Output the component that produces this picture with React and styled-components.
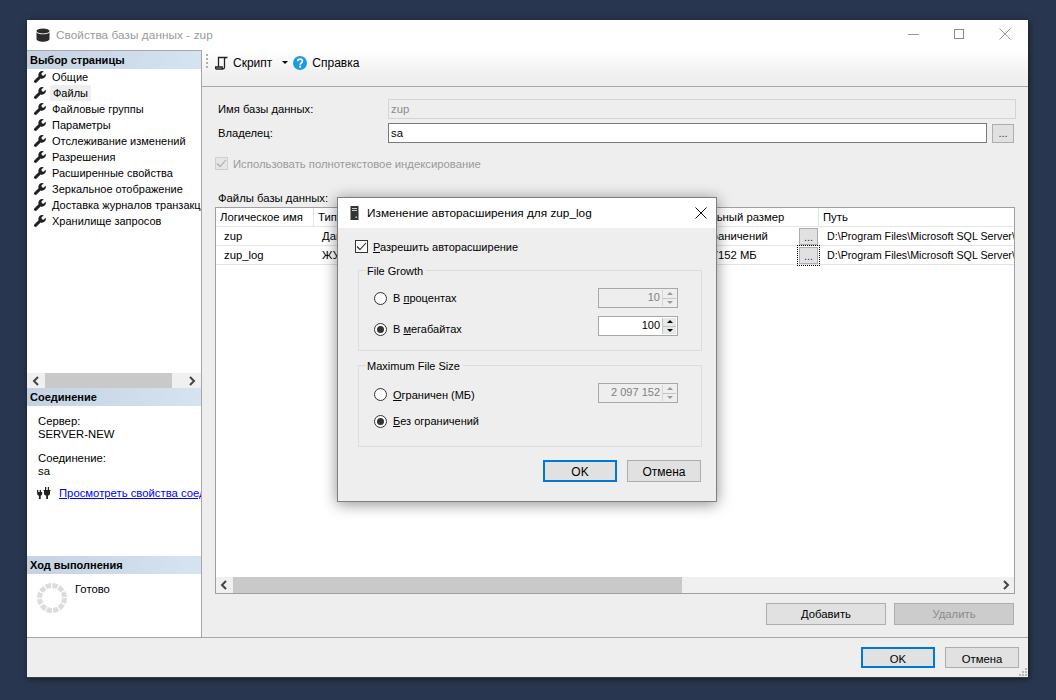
import React from "react";
import styled, { createGlobalStyle } from "styled-components";

const Global = createGlobalStyle`
  html, body { margin: 0; padding: 0; height: 100%; background: #28374f; }
  * { box-sizing: border-box; }
  body { font-family: "Liberation Sans", Arial, sans-serif; font-size: 11.3px; color: #000; }
  u { text-underline-offset: 1px; }
`;

const Page = styled.div`
  width: 1056px;
  height: 700px;
  padding: 20px 28px 22px 27px;
`;
const Window = styled.div`
  position: relative;
  width: 1001px;
  height: 658px;
  background: #eee;
  display: flex;
  flex-direction: column;
  box-shadow: 1px 1px 6px rgba(0, 0, 0, 0.55);
  border-bottom: 1px solid #3c3c3c;
`;
const TitleBar = styled.div`
  height: 30px;
  flex: none;
  background: #fff;
  display: flex;
  align-items: center;
  padding-left: 9px;
  gap: 6px;
`;
const WindowTitle = styled.span`
  font-size: 11.8px;
  letter-spacing: 0.05px;
  color: #9a9a9a;
  flex: 1;
`;
const Controls = styled.div`
  display: flex;
  align-items: center;
  margin-top: -2px;
`;
const ControlBtn = styled.div`
  width: 46px;
  height: 24px;
  display: flex;
  align-items: center;
  justify-content: center;
`;
const Main = styled.div`
  flex: 1;
  display: flex;
  min-height: 0;
`;
const Side = styled.aside`
  width: 175px;
  flex: none;
  background: #fff;
  border-right: 1px solid #a6a6ac;
  display: flex;
  flex-direction: column;
  border-top: 1px solid #a6a6ac;
`;
const SectionHead = styled.div`
  height: 18px;
  flex: none;
  background: linear-gradient(90deg, #c4d2e2, #d6e3f0);
  font-weight: 700;
  line-height: 18px;
  padding-left: 3px;
  font-size: 11px;
`;
const PageList = styled.ul`
  list-style: none;
  margin: 0;
  padding: 0 0 0 7px;
  height: 304px;
  flex: none;
  overflow: hidden;
  font-size: 11px;
`;
const PageItem = styled.li`
  height: 16px;
  display: flex;
  align-items: center;
  gap: 6px;
  white-space: nowrap;
`;
const PageLabel = styled.span`
  padding: 0 ${(p) => (p.$selected ? "3px" : "0")};
  margin-left: ${(p) => (p.$selected ? "-2px" : "0")};
  background: ${(p) => (p.$selected ? "#eeeeee" : "transparent")};
  line-height: 16px;
`;
const HScroll = styled.div`
  height: ${(p) => p.$h}px;
  flex: none;
  background: #f0f0f0;
  display: flex;
  align-items: center;
  position: relative;
  padding: 0 ${(p) => p.$pad}px;
  justify-content: space-between;
`;
const Thumb = styled.div`
  position: absolute;
  top: 0;
  bottom: 0;
  left: ${(p) => p.$left}px;
  width: ${(p) => p.$width}px;
  background: #c9c9c9;
`;
const ConnBody = styled.div`
  height: 150px;
  flex: none;
  padding: 9px 0 0 11px;
  line-height: 13px;
  overflow: hidden;
  white-space: nowrap;
`;
const ConnBlock = styled.div`
  margin-bottom: ${(p) => p.$mb}px;
`;
const LinkRow = styled.div`
  display: flex;
  align-items: center;
  gap: 7px;
  margin-left: -1px;
`;
const Link = styled.span`
  color: #0000ff;
  text-decoration: underline;
`;
const ProgressBody = styled.div`
  flex: 1;
  display: flex;
  padding: 9px 0 0 10px;
  gap: 8px;
`;
const Content = styled.section`
  flex: 1;
  display: flex;
  flex-direction: column;
  min-width: 0;
`;
const Toolbar = styled.div`
  height: 37px;
  flex: none;
  background: linear-gradient(180deg, #ffffff 0%, #f0f0f0 70%, #eeeeee 100%);
  border-bottom: 1px solid #a6a6ac;
  display: flex;
  align-items: flex-start;
  padding: 4px 0 0 4px;
  font-size: 12px;
`;
const Grip = styled.div`
  width: 2px;
  height: 15px;
  background: repeating-linear-gradient(180deg, #b0b0b0 0 2px, transparent 2px 4px);
  margin-right: 7px;
`;
const ToolItem = styled.div`
  display: flex;
  align-items: center;
  gap: 5px;
  height: 16px;
  margin-top: 1px;
  white-space: nowrap;
`;
const Caret = styled.div`
  width: 0;
  height: 0;
  border-left: 3px solid transparent;
  border-right: 3px solid transparent;
  border-top: 3px solid #000;
  margin: 7px 5px 0 ${(p) => p.$ml}px;
`;
const Form = styled.div`
  flex: 1;
  padding: 12px 13px 0 13px;
  display: flex;
  flex-direction: column;
`;
const FieldRow = styled.div`
  display: flex;
  align-items: center;
  height: 20px;
  margin-bottom: 4px;
  padding-left: 3px;
`;
const FieldLabel = styled.label`
  width: 170px;
  flex: none;
  font-size: 11.2px;
`;
const TextBox = styled.div`
  flex: ${(p) => (p.$disabled ? "1 1 auto" : "none")};
  width: ${(p) => (p.$disabled ? "auto" : "599px")};
  height: 20px;
  margin-right: ${(p) => (p.$disabled ? "-1px" : "0")};
  background: ${(p) => (p.$disabled ? "#eeeeee" : "#fff")};
  border: 1px solid ${(p) => (p.$disabled ? "#d4d4d4" : "#7a7a7a")};
  color: ${(p) => (p.$disabled ? "#8c8c8c" : "#000")};
  padding-left: 2px;
  line-height: 18px;
`;
const Ellipsis = styled.div`
  width: ${(p) => p.$w || 22}px;
  height: ${(p) => p.$h || 19}px;
  margin-left: ${(p) => p.$ml || 0}px;
  flex: none;
  background: #e1e1e1;
  border: 1px solid #adadad;
  text-align: center;
  line-height: 17px;
  font-size: 11px;
  outline: ${(p) => (p.$focus ? "1px dotted #000" : "none")};
  outline-offset: 1px;
  color: ${(p) => (p.$focus ? "#7000a0" : "#333")};
`;
const CheckRow = styled.div`
  display: flex;
  align-items: center;
  gap: ${(p) => p.$gap || 5}px;
  color: ${(p) => (p.$disabled ? "#9a9a9a" : "#000")};
  margin-top: ${(p) => p.$mt || 0}px;
`;
const CheckBox = styled.div`
  width: 13px;
  height: 13px;
  flex: none;
  background: ${(p) => (p.$disabled ? "#e6e6e6" : "#fff")};
  border: 1px solid ${(p) => (p.$disabled ? "#cfcfcf" : "#333")};
  display: flex;
  align-items: center;
  justify-content: center;
`;
const OwnRow = styled.div`
  margin-top: 10px;
  height: 14px;
`;
const TableLabel = styled.div`
  margin-top: 20px;
  padding-left: 3px;
  height: 14px;
  line-height: 14px;
`;
const TableBox = styled.div`
  margin-top: 2px;
  height: 387px;
  width: 800px;
  border: 1px solid #a0a0a0;
  background: #fff;
  display: flex;
  flex-direction: column;
  overflow: hidden;
`;
const RowsArea = styled.div`
  flex: 1;
  overflow: hidden;
`;
const GridRow = styled.div`
  display: grid;
  grid-template-columns: 98px 104px 110px 34px 257px 200px;
  height: 19px;
  border-bottom: 1px solid #e4e4e4;
  white-space: nowrap;
`;
const Cell = styled.div`
  padding-left: ${(p) => p.$pl || (p.$head ? 4 : 8)}px;
  line-height: 18px;
  min-width: 0;
  border-right: 1px solid ${(p) => (p.$head ? "#e4e4e4" : "transparent")};
  display: flex;
  align-items: center;
  justify-content: space-between;
  overflow: ${(p) => (p.$open ? "visible" : "hidden")};
`;
const CellText = styled.span`
  overflow: hidden;
  min-width: 0;
`;
const PathText = styled.span`
  font-size: 10.7px;
`;
const BottomBtns = styled.div`
  display: flex;
  justify-content: flex-end;
  gap: 8px;
  margin-top: 9px;
  width: 799px;
`;
const Btn = styled.div`
  width: ${(p) => p.$w}px;
  height: ${(p) => p.$h}px;
  background: ${(p) => (p.$disabled ? "#cccccc" : "#e1e1e1")};
  border: ${(p) => (p.$primary ? "2px solid #0078d7" : "1px solid #adadad")};
  color: ${(p) => (p.$disabled ? "#8a8a8a" : "#000")};
  display: flex;
  align-items: center;
  justify-content: center;
  flex: none;
  padding-top: ${(p) => p.$pt}px;
`;
const Footer = styled.div`
  height: 40px;
  flex: none;
  background: #eee;
  border-top: 1px solid #a6a6ac;
  display: flex;
  justify-content: flex-end;
  gap: 10px;
  padding: 9px 9px 0 0;
  position: relative;
`;
const ResizeGrip = styled.svg`
  position: absolute;
  right: 0;
  bottom: 0;
`;

/* dialog */
const Dialog = styled.div`
  position: absolute;
  left: 310px;
  top: 177px;
  width: 380px;
  height: 305px;
  background: #eee;
  border: 1px solid #7f7f7f;
  box-shadow: 0 2px 14px rgba(0, 0, 0, 0.45);
  display: flex;
  flex-direction: column;
  font-size: 11px;
`;
const DialogTitle = styled.div`
  height: 30px;
  flex: none;
  background: #fff;
  display: flex;
  align-items: center;
  padding-left: 12px;
  gap: 8px;
  font-size: 11.8px;
`;
const DialogClose = styled.div`
  margin-left: auto;
  margin-right: 9px;
  display: flex;
`;
const DialogBody = styled.div`
  flex: 1;
  padding: 12px 14px 0 17px;
  display: flex;
  flex-direction: column;
`;
const Group = styled.fieldset`
  margin: 0 0 ${(p) => p.$mb}px 3px;
  padding: 0 23px 0 15px;
  width: 344px;
  height: ${(p) => p.$h}px;
  border: 1px solid #dcdcdc;
  min-width: 0;
  display: flex;
  flex-direction: column;
`;
const GroupsWrap = styled.div`
  margin-top: 10px;
`;
const Legend = styled.legend`
  margin-left: -8px;
  padding: 1px 3px 0 1px;
  line-height: 14px;
`;
const OptionRow = styled.div`
  display: flex;
  align-items: center;
  justify-content: space-between;
  height: 20px;
  margin-top: ${(p) => p.$mt}px;
`;
const Radio = styled.div`
  width: 13px;
  height: 13px;
  flex: none;
  border: 1px solid #333;
  border-radius: 50%;
  background: #fff;
  display: flex;
  align-items: center;
  justify-content: center;
  &::after {
    content: "";
    width: 7px;
    height: 7px;
    border-radius: 50%;
    background: ${(p) => (p.$on ? "#333" : "transparent")};
  }
`;
const Spin = styled.div`
  width: 80px;
  height: 20px;
  display: flex;
  background: ${(p) => (p.$disabled ? "#eee" : "#fff")};
  border: 1px solid #a8a8a8;
  color: ${(p) => (p.$disabled ? "#808080" : "#000")};
`;
const SpinValue = styled.div`
  flex: 1;
  text-align: right;
  padding-right: 2px;
  line-height: 16px;
  font-size: 11px;
`;
const SpinArrows = styled.div`
  width: 14px;
  display: flex;
  flex-direction: column;
  border-left: 1px solid ${(p) => (p.$disabled ? "#d6d6d6" : "#c4c4c4")};
  margin: 1px 1px 1px 0;
`;
const SpinArrow = styled.div`
  flex: 1;
  display: flex;
  align-items: center;
  justify-content: center;
  background: ${(p) => (p.$disabled ? "#eee" : "#e8e8e8")};
  & + & {
    border-top: 1px solid ${(p) => (p.$disabled ? "#dcdcdc" : "#c4c4c4")};
  }
  &::after {
    content: "";
    width: 0;
    height: 0;
    border-left: 3px solid transparent;
    border-right: 3px solid transparent;
    ${(p) => (p.$up ? "border-bottom" : "border-top")}: 3px solid ${(p) => (p.$disabled ? "#9a9a9a" : "#000")};
  }
`;
const DialogBtns = styled.div`
  display: flex;
  justify-content: flex-end;
  gap: 10px;
  padding-right: 1px;
  font-size: 12px;
`;

const WrenchPath =
  "M11.8 2.6 9.6 4.8 7.9 4.3 7.4 2.6 9.6.4C8.2-.2 6.5.1 5.4 1.2 4.3 2.3 4 3.9 4.6 5.3L.5 9.3c-.7.7-.7 1.6-.1 2.2.6.6 1.6.6 2.2 0l4-4.1c1.4.6 3 .3 4.1-.8 1.1-1.1 1.4-2.7.9-4z";
const Wrench = () => (
  <svg width="12" height="12" viewBox="0 0 12 12" style={{ flex: "none" }}>
    <path d={WrenchPath} fill="#222" />
  </svg>
);
const Db = () => (
  <svg width="14" height="14" viewBox="0 0 14 14" style={{ flex: "none" }}>
    <ellipse cx="7" cy="3" rx="6.5" ry="2.6" fill="#2b2b2b" />
    <path d="M.5 4.2c1 1.4 3.5 2 6.5 2s5.5-.6 6.5-2V11c0 1.5-2.9 2.7-6.5 2.7S.5 12.5.5 11z" fill="#2b2b2b" />
  </svg>
);
const Server = () => (
  <svg width="9" height="14" viewBox="0 0 9 14" style={{ flex: "none" }}>
    <rect width="8" height="14" x=".5" fill="#333" />
    <rect x="2" y="2" width="5" height="1" fill="#ccc" />
    <rect x="2" y="4" width="5" height="1" fill="#ccc" />
    <rect x="5.5" y="10.5" width="1.5" height="1.5" fill="#ccc" />
  </svg>
);
const Scroll = () => (
  <svg width="13" height="14" viewBox="0 0 13 14" style={{ flex: "none" }}>
    <path d="M3.5 11V1.5h9M11 1.5C9.8 1.5 9.5 2.3 9.5 3v8.3c0 1.2-.8 1.7-1.8 1.7H1.5C.8 13 .5 12.4.5 11.600V11h6.700v.8c0 .7.4 1.200 1 1.200" fill="none" stroke="#222" strokeWidth="1.3" />
  </svg>
);
const Help = () => (
  <svg width="14" height="14" viewBox="0 0 14 14" style={{ flex: "none" }}>
    <circle cx="7" cy="7" r="7" fill="#1b9ae4" />
    <path d="M4.7 5.3C4.7 4 5.7 3.1 7 3.1s2.4.9 2.4 2.1c0 1.7-2.2 1.7-2.2 3.5" fill="none" stroke="#fff" strokeWidth="1.7" />
    <rect x="6.2" y="9.7" width="1.9" height="1.9" fill="#fff" />
  </svg>
);
const Plug = () => (
  <svg width="15" height="14" viewBox="0 0 15 14" style={{ flex: "none" }}>
    <g fill="#222">
      <path d="M0 4h1.3v2h1.4V4H4v2h1.2v1.5c0 1.2-.7 2-1.5 2.2V13H1.9V9.7C1 9.500.2 8.700.2 7.500z" />
      <path d="M8 1h1.200v3h1.600V1H12v3h1.500v1H13v2.500c0 1.200-1 2-2 2.100V13H9.200V9.600C8.200 9.500 7 8.700 7 7.500V5h-.5V4H8z" />
    </g>
  </svg>
);
const Spinner = () => (
  <svg width="30" height="30" viewBox="0 0 30 30" style={{ flex: "none" }}>
    <circle cx="15" cy="15" r="12.5" fill="none" stroke="#dcdcdc" strokeWidth="5" strokeDasharray="5.2 1.345" />
  </svg>
);
const Chevron = ({ dir, color = "#444" }) => (
  <svg width="8" height="10" viewBox="0 0 8 10">
    <path d={dir === "left" ? "M6 1 2 5l4 4" : "M2 1l4 4-4 4"} fill="none" stroke={color} strokeWidth="2" />
  </svg>
);
const Check = ({ color }) => (
  <svg width="11" height="9" viewBox="0 0 11 9">
    <path d="M1 4.5 4 7.5 10 1" fill="none" stroke={color} strokeWidth="1.1" />
  </svg>
);
const Xmark = ({ color, s = 12 }) => (
  <svg width={s} height={s} viewBox="0 0 12 12">
    <path d="M.5.5l11 11M11.5.5l-11 11" stroke={color} strokeWidth="1" fill="none" />
  </svg>
);

const pages = [
  "Общие",
  "Файлы",
  "Файловые группы",
  "Параметры",
  "Отслеживание изменений",
  "Разрешения",
  "Расширенные свойства",
  "Зеркальное отображение",
  "Доставка журналов транзакций",
  "Хранилище запросов",
];

const SpinBox = ({ value, disabled }) => (
  <Spin $disabled={disabled}>
    <SpinValue>{value}</SpinValue>
    <SpinArrows $disabled={disabled}>
      <SpinArrow $up $disabled={disabled} />
      <SpinArrow $disabled={disabled} />
    </SpinArrows>
  </Spin>
);

export default function App() {
  return (
    <Page>
      <Global />
      <Window>
        <TitleBar>
          <Db />
          <WindowTitle>Свойства базы данных - zup</WindowTitle>
          <Controls>
            <ControlBtn>
              <svg width="11" height="1"><rect width="11" height="1" fill="#999" /></svg>
            </ControlBtn>
            <ControlBtn>
              <svg width="10" height="10"><rect x=".5" y=".5" width="9" height="9" fill="none" stroke="#888" /></svg>
            </ControlBtn>
            <ControlBtn>
              <Xmark color="#999" />
            </ControlBtn>
          </Controls>
        </TitleBar>
        <Main>
          <Side>
            <SectionHead>Выбор страницы</SectionHead>
            <PageList>
              {pages.map((p, i) => (
                <PageItem key={p}>
                  <Wrench />
                  <PageLabel $selected={i === 1}>{p}</PageLabel>
                </PageItem>
              ))}
            </PageList>
            <HScroll $pad={5} $h={15}>
              <Thumb $left={18} $width={127} />
              <Chevron dir="left" />
              <Chevron dir="right" />
            </HScroll>
            <SectionHead>Соединение</SectionHead>
            <ConnBody>
              <ConnBlock $mb={11}>
                Сервер:
                <br />
                SERVER-NEW
              </ConnBlock>
              <ConnBlock $mb={8}>
                Соединение:
                <br />
                sa
              </ConnBlock>
              <LinkRow>
                <Plug />
                <Link>Просмотреть свойства соединения</Link>
              </LinkRow>
            </ConnBody>
            <SectionHead>Ход выполнения</SectionHead>
            <ProgressBody>
              <Spinner />
              <span>Готово</span>
            </ProgressBody>
          </Side>
          <Content>
            <Toolbar>
              <Grip />
              <ToolItem>
                <Scroll />
                Скрипт
              </ToolItem>
              <Caret $ml={10} />
              <ToolItem>
                <Help />
                Справка
              </ToolItem>
            </Toolbar>
            <Form>
              <FieldRow>
                <FieldLabel>Имя базы данных:</FieldLabel>
                <TextBox $disabled>zup</TextBox>
              </FieldRow>
              <FieldRow>
                <FieldLabel>Владелец:</FieldLabel>
                <TextBox>sa</TextBox>
                <Ellipsis $ml={5}>...</Ellipsis>
              </FieldRow>
              <OwnRow>
                <CheckRow $disabled>
                  <CheckBox $disabled>
                    <Check color="#a8a8a8" />
                  </CheckBox>
                  Использовать полнотекстовое индексирование
                </CheckRow>
              </OwnRow>
              <TableLabel>Файлы базы данных:</TableLabel>
              <TableBox>
                <RowsArea>
                  <GridRow>
                    <Cell $head>Логическое имя</Cell>
                    <Cell $head>Тип файла</Cell>
                    <Cell $head>Файловая группа</Cell>
                    <Cell $head>Размер</Cell>
                    <Cell $head>Авторасширение / максимальный размер</Cell>
                    <Cell $head>Путь</Cell>
                  </GridRow>
                  <GridRow>
                    <Cell>zup</Cell>
                    <Cell>Данные строк</Cell>
                    <Cell>PRIMARY</Cell>
                    <Cell>1024</Cell>
                    <Cell $open $pl={32}>
                      <CellText>С шагом 64 МБ, без ограничений</CellText>
                      <Ellipsis $w={19} $h={17}>...</Ellipsis>
                    </Cell>
                    <Cell><PathText>D:\Program Files\Microsoft SQL Server\MSSQL</PathText></Cell>
                  </GridRow>
                  <GridRow>
                    <Cell>zup_log</Cell>
                    <Cell>ЖУРНАЛ</Cell>
                    <Cell>Неприменимо</Cell>
                    <Cell>1024</Cell>
                    <Cell $open $pl={22}>
                      <CellText>С шагом 100 МБ, до 2097152 МБ</CellText>
                      <Ellipsis $w={19} $h={17} $focus>...</Ellipsis>
                    </Cell>
                    <Cell><PathText>D:\Program Files\Microsoft SQL Server\MSSQL</PathText></Cell>
                  </GridRow>
                </RowsArea>
                <HScroll $pad={4} $h={16}>
                  <Thumb $left={17} $width={449} />
                  <Chevron dir="left" />
                  <Chevron dir="right" />
                </HScroll>
              </TableBox>
              <BottomBtns>
                <Btn $w={120} $h={22} $pt={0}>Добавить</Btn>
                <Btn $w={120} $h={22} $pt={0} $disabled>Удалить</Btn>
              </BottomBtns>
            </Form>
          </Content>
        </Main>
        <Footer>
          <Btn $w={74} $h={21} $pt={2} $primary>OK</Btn>
          <Btn $w={74} $h={21} $pt={2}>Отмена</Btn>
          <ResizeGrip width="10" height="10" viewBox="0 0 10 10">
            <g fill="#b8b8b8">
              <rect x="7" y="1" width="2" height="2" />
              <rect x="4" y="4" width="2" height="2" />
              <rect x="7" y="4" width="2" height="2" />
              <rect x="1" y="7" width="2" height="2" />
              <rect x="4" y="7" width="2" height="2" />
              <rect x="7" y="7" width="2" height="2" />
            </g>
          </ResizeGrip>
        </Footer>
        <Dialog>
          <DialogTitle>
            <Server />
            Изменение авторасширения для zup_log
            <DialogClose>
              <Xmark color="#111" />
            </DialogClose>
          </DialogTitle>
          <DialogBody>
            <CheckRow>
              <CheckBox>
                <Check color="#222" />
              </CheckBox>
              <span><u>Р</u>азрешить авторасширение</span>
            </CheckRow>
            <GroupsWrap>
              <Group $h={88} $mb={7}>
                <Legend>File Growth</Legend>
                <OptionRow $mt={10}>
                  <CheckRow $gap={6}>
                    <Radio />
                    <span>В <u>п</u>роцентах</span>
                  </CheckRow>
                  <SpinBox value="10" disabled />
                </OptionRow>
                <OptionRow $mt={8}>
                  <CheckRow $gap={6} $mt={6}>
                    <Radio $on />
                    <span>В <u>м</u>егабайтах</span>
                  </CheckRow>
                  <SpinBox value="100" />
                </OptionRow>
              </Group>
              <Group $h={89} $mb={13}>
                <Legend>Maximum File Size</Legend>
                <OptionRow $mt={10}>
                  <CheckRow $gap={6} $mt={3}>
                    <Radio />
                    <span><u>О</u>граничен (МБ)</span>
                  </CheckRow>
                  <SpinBox value="2 097 152" disabled />
                </OptionRow>
                <OptionRow $mt={8}>
                  <CheckRow $gap={6}>
                    <Radio $on />
                    <span><u>Б</u>ез ограничений</span>
                  </CheckRow>
                </OptionRow>
              </Group>
            </GroupsWrap>
            <DialogBtns>
              <Btn $w={74} $h={22} $pt={1} $primary>OK</Btn>
              <Btn $w={74} $h={22} $pt={1}>Отмена</Btn>
            </DialogBtns>
          </DialogBody>
        </Dialog>
      </Window>
    </Page>
  );
}
